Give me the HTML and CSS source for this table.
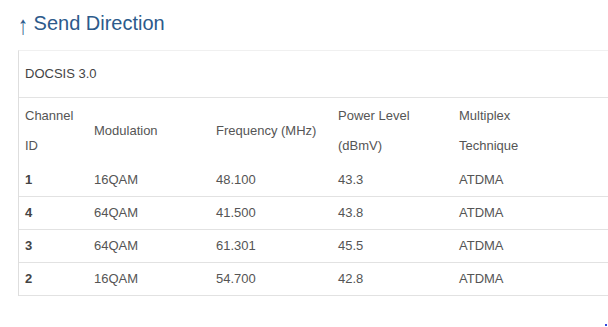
FILE: index.html
```html
<!DOCTYPE html>
<html>
<head>
<meta charset="utf-8">
<link rel="stylesheet" href="styles.css">
</head>
<body>
<div class="page">
  <h2 class="title"><span class="arrow">↑</span> Send Direction</h2>
  <div class="panel">
    <div class="panel-caption">DOCSIS 3.0</div>
    <table class="grid">
      <colgroup>
        <col class="c1"><col class="c2"><col class="c3"><col class="c4"><col class="c5">
      </colgroup>
      <thead>
        <tr>
          <th>Channel<br>ID</th>
          <th>Modulation</th>
          <th>Frequency (MHz)</th>
          <th>Power Level<br>(dBmV)</th>
          <th>Multiplex<br>Technique</th>
        </tr>
      </thead>
      <tbody>
        <tr><td class="id">1</td><td>16QAM</td><td>48.100</td><td>43.3</td><td>ATDMA</td></tr>
        <tr><td class="id">4</td><td>64QAM</td><td>41.500</td><td>43.8</td><td>ATDMA</td></tr>
        <tr><td class="id">3</td><td>64QAM</td><td>61.301</td><td>45.5</td><td>ATDMA</td></tr>
        <tr><td class="id">2</td><td>16QAM</td><td>54.700</td><td>42.8</td><td>ATDMA</td></tr>
      </tbody>
    </table>
  </div>
  <span class="dot"></span>
</div>
</body>
</html>
```
FILE: styles.css
```css
html, body {
  margin: 0;
  padding: 0;
  background: #fff;
  overflow: hidden;
}
.page {
  position: relative;
  width: 608px;
  height: 327px;
  overflow: hidden;
  padding: 11px 0 0 18px;
  box-sizing: border-box;
  font-family: "Liberation Sans", Arial, sans-serif;
}
.title {
  margin: 0;
  font-size: 20px;
  line-height: 24px;
  font-weight: normal;
  color: #2c5a8b;
}
.arrow {
  display: inline-block;
  transform: translateY(2px) scaleY(1.3);
}
.panel {
  margin-top: 15px;
  width: 700px;
  border-top: 1px solid #f0f0f0;
  border-left: 1px solid #dedede;
}
.panel-caption {
  padding: 15px 6px;
  font-size: 13px;
  line-height: 16px;
  color: #444;
  border-bottom: 1px solid #e3e3e3;
}
.grid {
  border-collapse: collapse;
  table-layout: fixed;
  width: 700px;
  font-size: 13px;
  color: #555;
}
.c1 { width: 69px; }
.c2 { width: 122px; }
.c3 { width: 122px; }
.c4 { width: 121px; }
.grid th {
  font-weight: normal;
  text-align: left;
  padding: 3px 6px;
  line-height: 30px;
  vertical-align: middle;
}
.grid td {
  padding: 8px 6px;
  line-height: 16px;
  border-bottom: 1px solid #e2e2e2;
}
.grid td.id {
  font-weight: bold;
  color: #444;
}
.dot {
  position: absolute;
  left: 605px;
  top: 324px;
  width: 2px;
  height: 2px;
  background: #3344dd;
}
```
